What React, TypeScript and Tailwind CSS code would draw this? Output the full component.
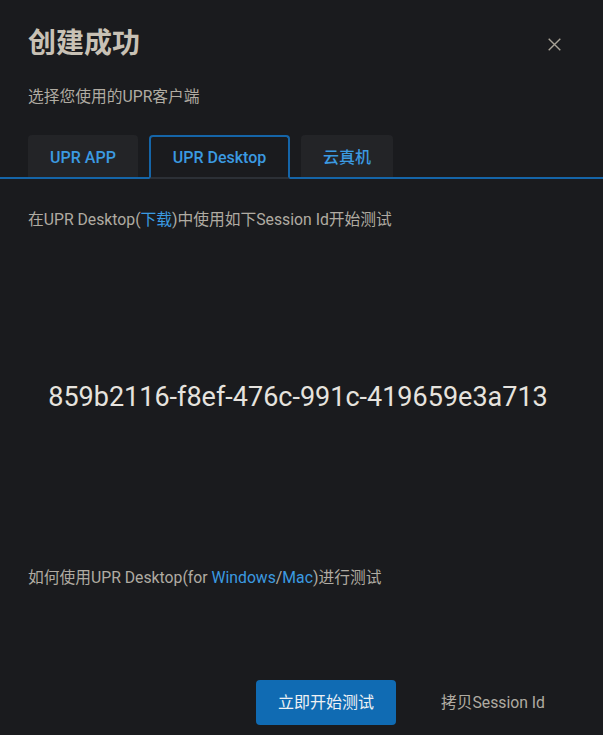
import { useState } from "react";

const tabs = [
  { label: "UPR APP", width: "w-[110px]" },
  { label: "UPR Desktop", width: "w-[141px]" },
  { label: "云真机", width: "w-[92px]" },
];

export default function App() {
  const [active, setActive] = useState(1);
  const sessionId = "859b2116-f8ef-476c-991c-419659e3a713";

  return (
    <div
      className="h-[735px] w-full bg-[#1a1b1e] text-[#b0aba2]"
      style={{ fontFamily: 'Roboto, "Noto Sans CJK SC", sans-serif' }}
    >
      {/* Header */}
      <div className="flex items-start justify-between pl-[28px] pr-[42px] pt-6">
        <h1 className="text-[28px] font-bold leading-[40px] text-[#c8c1b5]">
          创建成功
        </h1>
        <button className="mt-[14px] text-[#a8a397]">
          <svg width="13" height="13" viewBox="0 0 13 13" fill="none">
            <path
              d="M0.7 0.7 L12.3 12.3 M12.3 0.7 L0.7 12.3"
              stroke="currentColor"
              strokeWidth="1.4"
            />
          </svg>
        </button>
      </div>

      <p className="mt-[21px] pl-[28px] text-[15.75px] leading-6">
        选择您使用的UPR客户端
      </p>

      {/* Tabs */}
      <div className="mt-[26px] flex gap-[11px] border-b-2 border-[#1565a8] pl-[28px]">
        {tabs.map((t, i) =>
          i === active ? (
            <button
              key={t.label}
              onClick={() => setActive(i)}
              className={`${t.width} -mb-[2px] h-[44px] rounded-t-[4px] border-2 border-[#1565a8] border-b-[#2c3036] bg-[#1a1b1e] pt-[2px] text-base font-medium text-[#3b9ae1]`}
            >
              {t.label}
            </button>
          ) : (
            <button
              key={t.label}
              onClick={() => setActive(i)}
              className={`${t.width} -mb-[2px] h-[44px] rounded-t-[4px] border-b-2 border-[#1565a8] bg-[#232427] pt-[3px] text-base font-medium text-[#3b9ae1]`}
            >
              {t.label}
            </button>
          )
        )}
      </div>

      <p className="mt-[29px] pl-[28px] text-[15.75px] leading-6">
        在UPR Desktop(<span className="text-[#3b9ae1]">下载</span>
        )中使用如下Session Id开始测试
      </p>

      <div className="mt-[149px] pr-[7px] text-center text-[27px] leading-8 text-[#e6e3de]">
        {sessionId}
      </div>

      <p className="mt-[153px] pl-[28px] text-[15.75px] leading-6">
        如何使用UPR Desktop(for{" "}
        <span className="text-[#3b9ae1]">Windows</span>/
        <span className="text-[#3b9ae1]">Mac</span>)进行测试
      </p>

      {/* Footer */}
      <div className="mt-[90px] flex items-center justify-end gap-[45px] pr-[58px]">
        <button className="h-[45px] w-[140px] rounded-[4px] bg-[#106bb3] text-base text-[#eef1f4]">
          立即开始测试
        </button>
        <button className="text-[15.75px] text-[#b0aba2]">拷贝Session Id</button>
      </div>
    </div>
  );
}
